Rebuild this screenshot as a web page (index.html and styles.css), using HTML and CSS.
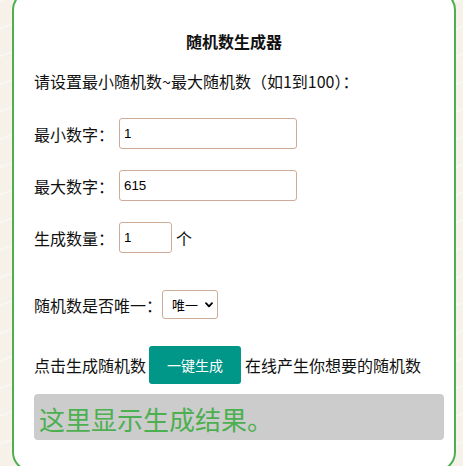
FILE: index.html
```html
<!DOCTYPE html>
<html lang="zh-CN">
<head>
<meta charset="utf-8">
<title>随机数生成器</title>
<link rel="stylesheet" href="styles.css">
</head>
<body>
<div class="card">
  <h1 class="title">随机数生成器</h1>
  <p class="intro">请设置最小随机数~最大随机数（如1到100）：</p>
  <div class="row field first"><label class="label">最小数字：</label><input class="num wide" type="text" value="1"></div>
  <div class="row field"><label class="label">最大数字：</label><input class="num wide" type="text" value="615"></div>
  <div class="row field"><label class="label">生成数量：</label><input class="num narrow" type="text" value="1"><span class="unit">个</span></div>
  <div class="row unique"><label class="label">随机数是否唯一：</label><span class="select-wrap"><select class="choice"><option>唯一</option><option>不唯一</option></select><svg class="chev" width="8" height="6" viewBox="0 0 8 6"><path d="M1 1.2 L4 4.4 L7 1.2" fill="none" stroke="#000" stroke-width="1.8" stroke-linecap="round" stroke-linejoin="round"/></svg></span></div>
  <div class="row action"><span>点击生成随机数</span><button class="go" type="button">一键生成</button><span>在线产生你想要的随机数</span></div>
  <div class="result">这里显示生成结果。</div>
</div>
</body>
</html>
```
FILE: styles.css
```css
html, body {
  margin: 0;
  padding: 0;
  overflow: hidden;
}
body {
  background-color: #f6f2e9;
  background-image: repeating-linear-gradient(160deg, rgba(255,255,255,0.35) 0 2px, rgba(0,0,0,0) 2px 26px);
  font-family: "Noto Sans CJK SC", "Noto Sans", sans-serif;
  font-size: 16px;
  line-height: 24px;
  color: #111;
}
.card {
  box-sizing: border-box;
  width: 444px;
  margin: -10px 0 0 12px;
  padding: 37px 20px 30px 20px;
  background: #fff;
  border: 2px solid #4caf50;
  border-radius: 20px;
}
.title {
  margin: 0;
  font-size: 16px;
  line-height: 24px;
  font-weight: bold;
  text-align: center;
}
.intro {
  margin: 16px 0 0 0;
}
.row {
  display: flex;
  align-items: center;
}
.field {
  margin-top: 21px;
}
.field.first {
  margin-top: 25px;
}
.field .label {
  width: 80px;
  margin-right: 5px;
}
.num {
  box-sizing: border-box;
  height: 31px;
  margin: 0;
  padding: 0 4px;
  border: 1px solid #d0ab98;
  border-radius: 3px;
  font-family: "Liberation Sans", Arial, sans-serif;
  font-size: 13.33px;
  color: #000;
  background: #fff;
  outline: none;
}
.wide { width: 178px; }
.narrow { width: 53px; }
.unit { margin-left: 4px; }
.unique {
  margin-top: 37px;
}
.select-wrap {
  position: relative;
  display: block;
  width: 56px;
  height: 29px;
}
.choice {
  -webkit-appearance: none;
  appearance: none;
  box-sizing: border-box;
  display: block;
  width: 56px;
  height: 29px;
  margin: 0;
  padding: 0 0 0 9px;
  border: 1px solid #d0ab98;
  border-radius: 3px;
  background: #fff;
  font-family: "Noto Sans CJK SC", sans-serif;
  font-size: 13px;
  color: #000;
}
.chev {
  position: absolute;
  right: 5px;
  top: 12px;
  pointer-events: none;
}
.action {
  margin-top: 27px;
}
.go {
  box-sizing: border-box;
  width: 92px;
  height: 38px;
  margin: 0 4px 0 3px;
  padding: 0;
  border: none;
  border-radius: 3px;
  background: #009688;
  color: #fff;
  font-family: "Noto Sans CJK SC", sans-serif;
  font-size: 14px;
}
.result {
  box-sizing: border-box;
  width: 410px;
  height: 46px;
  margin-top: 10px;
  padding: 3px 0 0 5px;
  background: #cccccc;
  border-radius: 4px;
  color: #4caf50;
  font-size: 26px;
  line-height: 43px;
}
```
